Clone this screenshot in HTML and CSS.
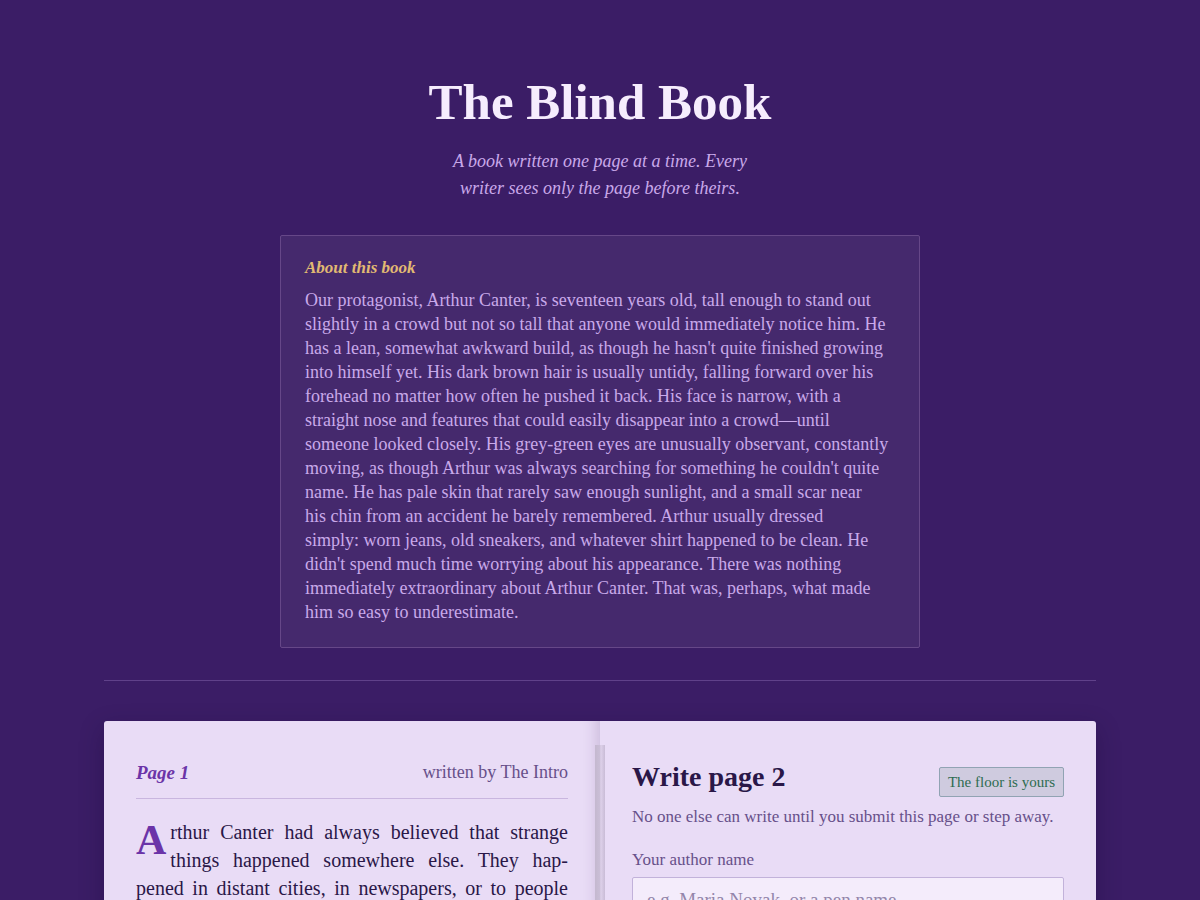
FILE: index.html
```html
<!DOCTYPE html>
<html lang="en">
<head>
<meta charset="utf-8">
<meta name="viewport" content="width=device-width, initial-scale=1">
<title>The Blind Book</title>
<link rel="stylesheet" href="styles.css">
</head>
<body>
<div class="shell">
  <header class="masthead">
    <h1 class="title">The Blind Book</h1>
    <p class="tagline">A book written one page at a time. Every<br>writer sees only the page before theirs.</p>
    <section class="about">
      <h2 class="about-title">About this book</h2>
      <p class="about-text">Our protagonist, Arthur Canter, is seventeen years old, tall enough to stand out<br>
slightly in a crowd but not so tall that anyone would immediately notice him. He<br>
has a lean, somewhat awkward build, as though he hasn't quite finished growing<br>
into himself yet. His dark brown hair is usually untidy, falling forward over his<br>
forehead no matter how often he pushed it back. His face is narrow, with a<br>
straight nose and features that could easily disappear into a crowd—until<br>
someone looked closely. His grey-green eyes are unusually observant, constantly<br>
moving, as though Arthur was always searching for something he couldn't quite<br>
name. He has pale skin that rarely saw enough sunlight, and a small scar near<br>
his chin from an accident he barely remembered. Arthur usually dressed<br>
simply: worn jeans, old sneakers, and whatever shirt happened to be clean. He<br>
didn't spend much time worrying about his appearance. There was nothing<br>
immediately extraordinary about Arthur Canter. That was, perhaps, what made<br>
him so easy to underestimate.</p>
    </section>
  </header>
  <main class="spread">
    <article class="page page-left">
      <header class="page-head">
        <h2 class="page-number">Page 1</h2>
        <span class="byline">written by The Intro</span>
      </header>
      <p class="story">Arthur Canter had always believed that strange<br>things happened somewhere else. They hap-<br>pened in distant cities, in newspapers, or to people</p>
    </article>
    <section class="page page-right">
      <div class="write-head">
        <h2 class="write-title">Write page 2</h2>
        <span class="badge">The floor is yours</span>
      </div>
      <p class="note">No one else can write until you submit this page or step away.</p>
      <form class="form">
        <label class="label" for="author">Your author name</label>
        <input class="field" id="author" type="text" placeholder="e.g. Maria Novak, or a pen name">
      </form>
    </section>
  </main>
</div>
</body>
</html>
```

FILE: styles.css
```css
* { box-sizing: border-box; }

body {
  margin: 0;
  background: #3b1d66;
  color: #2a1748;
  font-family: "Liberation Serif", serif;
}

h1, h2, p { margin: 0; }

.shell {
  max-width: 1056px;
  margin: 0 auto;
  padding: 72px 32px 40px;
}

.masthead {
  display: flex;
  flex-direction: column;
  align-items: center;
  padding-bottom: 32px;
  border-bottom: 1px solid #60418a;
}

.title {
  color: #f6edfd;
  font-size: 51px;
  line-height: 60px;
  font-weight: 700;
}

.tagline {
  margin-top: 16px;
  color: #c9a9ea;
  font-size: 18px;
  line-height: 27px;
  font-style: italic;
  text-align: center;
}

.about {
  width: 100%;
  max-width: 640px;
  margin-top: 33px;
  padding: 20px 24px 23px;
  background: #45296d;
  border: 1px solid #664788;
  border-radius: 2px;
}

.about-title {
  color: #e2ba72;
  font-size: 17px;
  line-height: 24px;
  font-style: italic;
  font-weight: 700;
}

.about-text {
  margin-top: 8px;
  color: #c9a9ea;
  font-size: 18px;
  line-height: 24px;
}

.spread {
  position: relative;
  display: grid;
  grid-template-columns: 1fr 1fr;
  margin-top: 40px;
  border-radius: 3px;
  box-shadow: 0 8px 24px rgba(20, 5, 45, 0.3);
}

.spread::after {
  content: "";
  position: absolute;
  top: 24px;
  bottom: 24px;
  left: 50%;
  width: 10px;
  margin-left: -5px;
  background: linear-gradient(90deg, #c4b8cf, #cabed6 45%, #ddd0e9 60%, #c9bcd6);
}

.page {
  min-width: 0;
  padding: 40px 32px;
  background: #e9dcf6;
}

.page-left {
  border-radius: 3px 0 0 3px;
  box-shadow: inset -16px 0 16px -14px rgba(60, 30, 90, 0.2);
}

.page-right { border-radius: 0 3px 3px 0; }

.page-head {
  display: flex;
  justify-content: space-between;
  align-items: center;
  padding-bottom: 14px;
  border-bottom: 1px solid #c9b6df;
}

.page-number {
  color: #6b34a8;
  font-size: 19px;
  line-height: 23px;
  font-style: italic;
}

.byline {
  color: #67508a;
  font-size: 18px;
  line-height: 23px;
}

.story {
  margin-top: 19px;
  font-size: 20px;
  line-height: 28px;
  text-align: justify;
  text-align-last: justify;
}

.story::first-letter {
  float: left;
  margin-right: 4px;
  color: #6b34a8;
  font-size: 42px;
  line-height: 44px;
  font-weight: 700;
}

.write-head {
  display: flex;
  justify-content: space-between;
  align-items: flex-start;
}

.write-title {
  font-size: 28px;
  line-height: 32px;
}

.badge {
  margin-top: 6px;
  padding: 5px 8px;
  color: #2d6b50;
  background: #cfcbdf;
  border: 1px solid #91a3b3;
  border-radius: 2px;
  font-size: 15px;
  line-height: 18px;
}

.note {
  margin-top: 8px;
  color: #67508a;
  font-size: 17px;
  line-height: 24px;
}

.form {
  display: flex;
  flex-direction: column;
  gap: 5px;
  margin-top: 19px;
}

.label {
  color: #67508a;
  font-size: 17px;
  line-height: 24px;
}

.field {
  width: 100%;
  padding: 10px 14px;
  color: #2a1748;
  background: #f4ecfb;
  border: 1px solid #c2b2da;
  border-radius: 2px;
  font-family: inherit;
  font-size: 19px;
  line-height: 24px;
}

.field::placeholder { color: #9385aa; opacity: 1; }
```
